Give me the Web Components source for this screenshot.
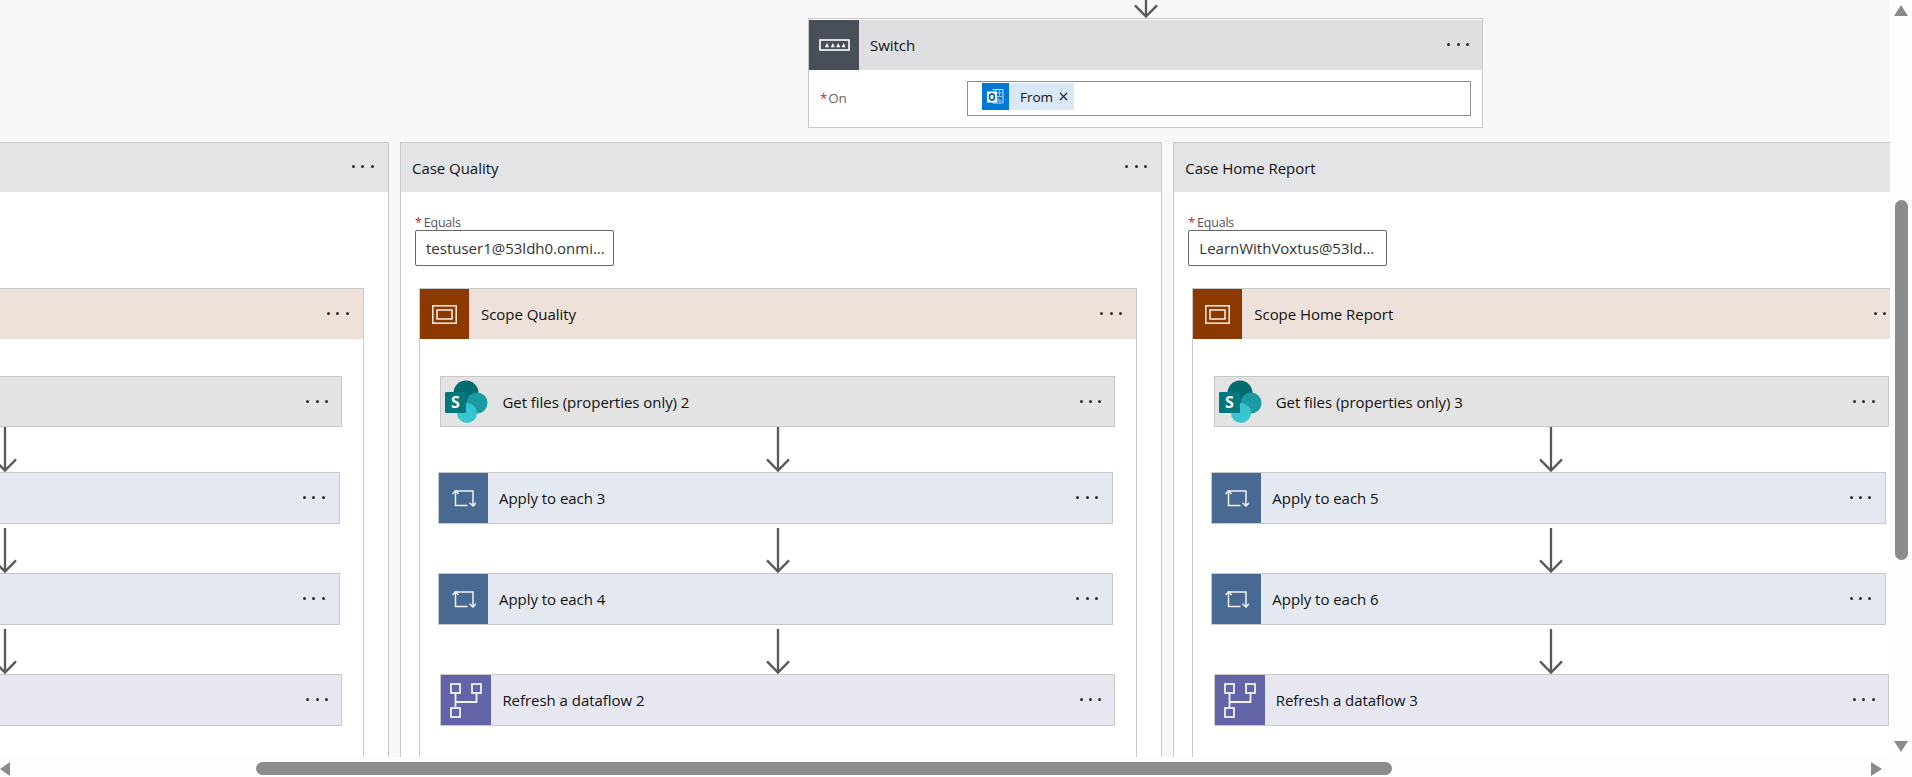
<!DOCTYPE html>
<html lang="en"><head><meta charset="utf-8"><title>Flow designer</title>
<style>
html,body{margin:0;height:100%;overflow:hidden}
body{font-family:"Open Sans","Noto Sans",sans-serif;color:#000}
</style></head><body>
<template id="t-app"><style>
:host{display:grid;grid-template-columns:1890px 22px;grid-template-rows:757px 20px;width:1912px;height:777px;background:#fdfdfd}
.view{overflow:hidden;background:#f8f8f8;min-width:0;grid-column:1;grid-row:1}
</style><div class="view"><slot></slot></div><slot name="v"></slot><slot name="h"></slot></template>

<template id="t-v"><style>
:host{display:flex;flex-direction:column;align-items:center;background:#fdfdfd;height:777px;grid-column:2;grid-row:1 / 3;padding-top:5px;box-sizing:border-box}
.u{width:0;height:0;border:7.5px solid transparent;border-top:0;border-bottom:11px solid #8a8a8a}
.t{width:13px;height:360px;border-radius:7px;background:#8c8c8c;margin:184px 0 181px}
.d{width:0;height:0;border:7.5px solid transparent;border-bottom:0;border-top:11px solid #8a8a8a}
</style><div class="u"></div><div class="t"></div><div class="d"></div></template>

<template id="t-h"><style>
:host{display:flex;align-items:flex-start;background:#fdfdfd;height:20px;padding-top:5px;box-sizing:border-box;grid-column:1;grid-row:2}
.l{width:0;height:0;border:7px solid transparent;border-left:0;border-right:10px solid #8a8a8a}
.t{width:1136px;height:13px;border-radius:7px;background:#8c8c8c;margin-left:246px}
.r{width:0;height:0;border:7px solid transparent;border-right:0;border-left:11px solid #8a8a8a;margin-left:479px}
</style><div class="l"></div><div class="t"></div><div class="r"></div></template>

<template id="t-dots"><style>
:host{display:flex;gap:6.33px;align-items:center;flex:none}
i{display:block;width:3px;height:3px;border-radius:50%;background:#2b2b33}
</style><i></i><i></i><i></i></template>

<template id="t-head"><style>
:host{display:flex;align-items:center;flex:none;background:var(--head,#e3e4e6);font-size:15px;letter-spacing:-.04px;color:#111}
.ic{flex:none;display:flex;align-items:center;justify-content:center;align-self:stretch;background:var(--ic,transparent);width:var(--icw,50px)}
.ti{flex:1;min-width:0;white-space:nowrap;padding-left:var(--tipad,11px)}
flow-dots{margin-right:var(--dotr,15px);margin-bottom:var(--dotb,1px)}
</style><div class="ic" part="ic"><slot name="icon"></slot></div><div class="ti"><slot></slot></div><flow-dots></flow-dots></template>

<template id="t-action"><style>
:host{display:block;box-sizing:border-box;border:1px solid #c8c8c8;background:var(--head);height:var(--h,52px);flex:none;width:var(--w,675px);margin-left:var(--ml,0)}
flow-head{height:100%}
</style><flow-head><slot name="icon" slot="icon"></slot><slot></slot></flow-head></template>

<template id="t-arrow"><style>
:host{display:flex;align-items:flex-end;justify-content:center;flex:none;height:var(--a,45px);align-self:center;margin-left:-20px}
svg{display:block;width:24px;height:45px}
</style><svg viewBox="0 0 24 45" fill="none" stroke="#595959" stroke-width="2.300"><path d="M12 0V44M1 32.400 12 43.600 23 32.400"/></svg></template>

<template id="t-scope"><style>
:host{display:block;border:1px solid #c8c8c8;border-bottom:0;background:#fff;width:718px;box-sizing:border-box;margin-left:18px;padding-bottom:60px}
flow-head{height:50px;--head:#eee1da;--ic:#8c3900;--icw:49px;--tipad:12px;--dotr:14px}
.b{display:flex;flex-direction:column;align-items:flex-start;padding:37px 0 0 20.4px}
</style><flow-head><slot name="icon" slot="icon"></slot><slot name="title"></slot></flow-head><div class="b"><slot></slot></div></template>

<template id="t-case"><style>
:host{display:block;flex:none;width:762px;box-sizing:border-box;border:1px solid #c8c8c8;background:#fff}
flow-head{height:49px;--head:#e3e4e6;--icw:0px;--tipad:11px;--dotr:14px;--dotb:3px}
.f{display:flex;flex-direction:column;align-items:flex-start;padding:22px 0 22px 14px}
.l{font-size:12.500px;line-height:18px;height:16px;color:#555;letter-spacing:-.2px}
::slotted([slot=star]){color:#e81123;margin-right:2px}
.i{box-sizing:border-box;width:199px;height:36px;border:1px solid #666;border-radius:2px;font-size:15px;line-height:34px;padding-left:10px;white-space:nowrap;color:#333}
</style><flow-head><slot name="title"></slot></flow-head><div class="f"><div class="l"><slot name="star"></slot><slot name="label"></slot></div><div class="i"><slot name="value"></slot></div></div><slot></slot></template>

<template id="t-switch"><style>
:host{display:block;box-sizing:border-box;width:675px;height:110px;border:1px solid #c8c8c8;background:#fff;margin-left:808px;padding-top:1px}
flow-head{height:50px;--head:#dedfe1;--ic:#484f58;--icw:50px;--tipad:11px;--dotr:13px;--dotb:1px}
.r{display:flex;align-items:center;padding:11px 11px 0 11px}
.k{width:147px;font-size:13.500px;color:#666;letter-spacing:-.2px;padding-bottom:2px}
::slotted([slot=star]){color:#e81123;margin-right:1px}
.v{flex:1;box-sizing:border-box;height:35px;border:1px solid #8f8f8f;padding:1px 0 0 14px}
.c{display:inline-flex;align-items:center;height:27px;background:#d8e8f7;font-size:13.500px;width:92px;color:#111}
.o{width:27px;height:27px;background:#0078d4;display:flex;align-items:center;justify-content:center;margin-right:11px}
svg{display:block}
.x{margin-left:6px}
</style><flow-head><slot name="icon" slot="icon"></slot><slot name="title"></slot></flow-head>
<div class="r"><div class="k"><slot name="star"></slot><slot name="key"></slot></div><div class="v"><div class="c"><div class="o"><svg width="19" height="18" viewBox="0 0 19 18"><path d="M6.5 1.5H17V15H6.5" fill="none" stroke="#cfe4f7" stroke-width="1"/><path d="M10 1.5V15M13.5 1.5V8M6.5 5H17M6.5 8.5H17" stroke="#8dc1ec" stroke-width="1"/><path d="M8 13 12 9.500 17.500 14.500 12 16.500Z" fill="#5aa6e6"/><rect x="1" y="3.500" width="10" height="11" fill="#fff"/><ellipse cx="6" cy="9" rx="2.500" ry="3.200" fill="none" stroke="#0a66b5" stroke-width="1.700"/></svg></div><slot name="chip"></slot><svg class="x" width="9" height="9" viewBox="0 0 9 9"><path d="M1 1 8 8M8 1 1 8" stroke="#222" stroke-width="1.200"/></svg></div></div></div></template>

<script>
function shadow(el,id){const r=el.attachShadow({mode:'open'});r.appendChild(document.getElementById(id).content.cloneNode(true));return r}
for(const [n,t] of [['flow-app','t-app'],['flow-vbar','t-v'],['flow-hbar','t-h'],['flow-dots','t-dots'],['flow-head','t-head'],['flow-action','t-action'],['flow-arrow','t-arrow'],['flow-scope','t-scope'],['flow-case','t-case'],['flow-switch','t-switch']]){
  customElements.define(n,class extends HTMLElement{constructor(){super();shadow(this,t)}});
}
const ICONS={
 sw:'<svg width="31" height="12" viewBox="0 0 31 12"><rect x="1" y="1" width="29" height="10" fill="none" stroke="#fff" stroke-width="1.600"/><path d="M6 8.200 8 4 10 8.200ZM11.800 8.200 13.800 4 15.800 8.200ZM17.200 8.200 19.200 4 21.200 8.200ZM22.600 8.200 24.600 4 26.600 8.200Z" fill="#fff"/></svg>',
 scope:'<svg width="25" height="19" viewBox="0 0 25 19" fill="none" stroke="#fbefe8" stroke-width="1.500"><rect x=".8" y=".8" width="23.400" height="17.400"/><rect x="5" y="5" width="15" height="9"/></svg>',
 loop:'<svg width="24" height="17" viewBox="0 0 24 17" fill="none" stroke="#f0f3f7" stroke-width="1.500"><path d="M3.500 1H21V16M3.500 0V15.500H15.500"/><path d="M.5 4 3.500 .8 6.500 4"/><path d="M17.500 12.800 21 16 24 12.800"/></svg>',
 flow:'<svg width="32" height="35" viewBox="0 0 32 35" fill="none" stroke="#f1f1f8" stroke-width="1.800"><rect x="1" y="1" width="9" height="9"/><rect x="22" y="1" width="9" height="9"/><rect x="1" y="25" width="9" height="9"/><path d="M5.500 10V25M4.600 19H26.500V10"/></svg>',
 sp:'<svg width="43" height="43" viewBox="0 0 43 43"><circle cx="21" cy="13" r="12.500" fill="#036c70"/><circle cx="32" cy="23" r="10.500" fill="#1a9ba1"/><circle cx="22" cy="33" r="10" fill="#37c6d0"/><rect x="0" y="12" width="21" height="21" rx="1" fill="#03787c"/><text x="10.500" y="28" text-anchor="middle" font-size="16" font-family="Open Sans" font-weight="700" fill="#fff">S</text></svg>'
};
customElements.define('flow-ic',class extends HTMLElement{
 connectedCallback(){if(this.shadowRoot)return;const r=this.attachShadow({mode:'open'});r.innerHTML='<style>:host{display:block;line-height:0}svg{display:block}</style>'+ICONS[this.getAttribute('n')]}
});

const ic=(n,st,on)=>on?`<flow-ic n="${n}" slot="icon"${st?` style="${st}"`:''}></flow-ic>`:'';
const acts=(g,a1,a2,r,on)=>`
<flow-action style="--head:#e3e3e3;--h:51px;--icw:47px;--ic:transparent;--tipad:14px;--dotr:13px">${ic('sp','margin-left:4px',on)}${g}</flow-action>
<flow-arrow></flow-arrow>
<flow-action style="--ml:-2.4px;--head:#e4e8f0;--ic:#486991;--icw:49px;--tipad:11px;--dotr:14px">${ic('loop','',on)}${a1}</flow-action>
<flow-arrow style="--a:49px"></flow-arrow>
<flow-action style="--ml:-2.4px;--head:#e4e8f0;--ic:#486991;--icw:49px;--tipad:11px;--dotr:14px">${ic('loop','',on)}${a2}</flow-action>
<flow-arrow style="--a:49px"></flow-arrow>
<flow-action style="--head:#e7e7f1;--ic:#6264a7;--icw:50px;--tipad:11px;--dotr:13px">${ic('flow','',on)}${r}</flow-action>`;
const kase=(t,v,s,g,a1,a2,r)=>{const on=!!t;return `<flow-case><span slot="title">${t}</span>${on?'<span slot="star">*</span><span slot="label">Equals</span>':''}<span slot="value">${v}</span><flow-scope>${ic('scope','',on)}<span slot="title">${s}</span>${acts(g,a1,a2,r,on)}</flow-scope></flow-case>`};
document.addEventListener('DOMContentLoaded',()=>{
 document.getElementById('cases').innerHTML=
  kase('','','','','','','')+
  kase('Case Quality','testuser1@53ldh0.onmi...','Scope Quality','Get files (properties only) 2','Apply to each 3','Apply to each 4','Refresh a dataflow 2')+
  kase('Case Home Report','LearnWithVoxtus@53ld...','Scope Home Report','Get files (properties only) 3','Apply to each 5','Apply to each 6','Refresh a dataflow 3');
});
</script>
<style>
#cases{display:flex;gap:11.3px;margin:14px 0 0 -373.3px}
flow-arrow.top{margin-left:1134px;justify-content:flex-start;width:24px;height:18px}
</style>
<flow-app>
 <flow-arrow class="top"></flow-arrow>
 <flow-switch><flow-ic n="sw" slot="icon"></flow-ic><span slot="title">Switch</span><span slot="star">*</span><span slot="key">On</span><span slot="chip">From</span></flow-switch>
 <div id="cases"></div>
 <flow-vbar slot="v"></flow-vbar>
 <flow-hbar slot="h"></flow-hbar>
</flow-app>
</body></html>
